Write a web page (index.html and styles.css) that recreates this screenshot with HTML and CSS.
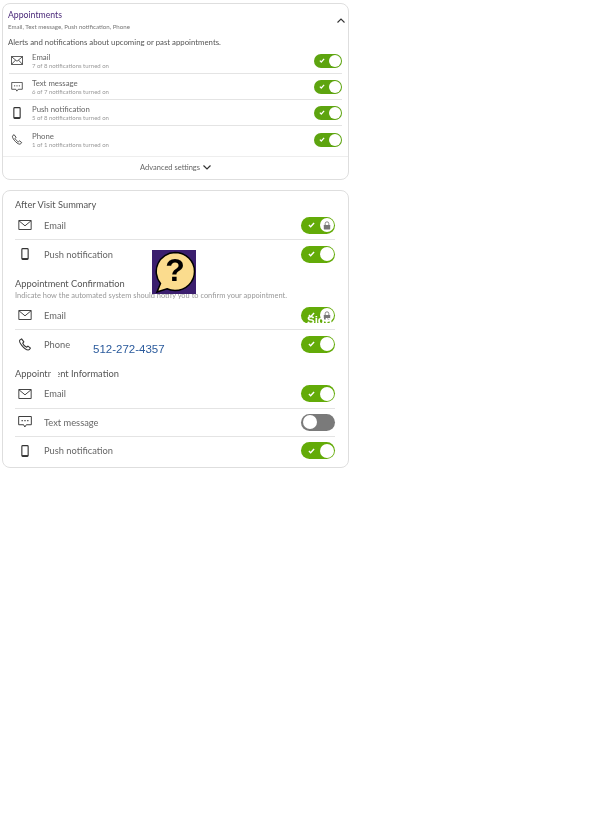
FILE: index.html
```html
<!DOCTYPE html>
<html>
	<head>
		<title>Notification settings</title>
		<link rel="stylesheet" href="styles.css">
	</head>
	<body>
		<svg class="defs" width="0" height="0">
			<symbol id="icEmail" viewBox="0 0 16 12"><path d="M.6.6h14.8v10.8H.6zM.6.8 8 7l7.4-6.2" fill="none" stroke="currentColor" stroke-width="1.1"/></symbol>
			<symbol id="icEmailBox" viewBox="0 0 16 12"><path d="M.6.6h14.800v10.800H.6zM.6.8 8 7l7.400-6.200M.6 11.200 6 5.500M15.400 11.200 10 5.500" fill="none" stroke="currentColor" stroke-width="1.100"/></symbol>
			<symbol id="icText" viewBox="0 0 16 14"><path d="M.6.6h14.800v9.600H9.600l-1.800 2.600-1.400-2.600H.6z" fill="none" stroke="currentColor" stroke-width="1.100"/><path d="M4 5.400h1.400M7.300 5.400h1.400M10.600 5.400H12" stroke="currentColor" stroke-width="1.400"/></symbol>
			<symbol id="icPush" viewBox="0 0 10 16"><rect x=".8" y=".8" width="8.400" height="14.400" rx="1.200" fill="none" stroke="currentColor" stroke-width="1.500"/><path d="M1 13.400h8v1.600H1z" fill="currentColor"/></symbol>
			<symbol id="icPhone" viewBox="0 0 16 16"><path d="M3.800 1 1.600 2.600c-.6 1 0 3.400 2.400 6.400s5.400 5.600 8 5.800c1 0 2-1 2.800-2.400l-3.200-2.400-1.600 1.400C8.400 10.800 6 8.400 5.200 6.400l1.400-1.600z" fill="none" stroke="currentColor" stroke-width="1.300" stroke-linejoin="round"/></symbol>
			<symbol id="icCheck" viewBox="0 0 8 7"><path d="M1 3.600 3 5.600 7 1.200" fill="none" stroke="currentColor" stroke-width="1.700"/></symbol>
			<symbol id="icLock" viewBox="0 0 10 11"><path d="M2.700 5V3.200a2.300 2.300 0 0 1 4.600 0V5" fill="none" stroke="currentColor" stroke-width="1.100"/><rect x="1" y="5" width="8" height="5.500" rx=".6" fill="currentColor"/></symbol>
		</svg>

		<div class="page">
			<div class="card cardSmall">
				<div class="head">
					<div>
						<div class="title">Appointments</div>
						<div class="channels">Email, Text message, Push notification, Phone</div>
					</div>
					<svg class="caret" width="8" height="5" viewBox="0 0 8 5"><path d="M.5 4.500 4 1l3.500 3.500" fill="none" stroke="currentColor" stroke-width="1.100"/></svg>
				</div>
				<div class="intro">Alerts and notifications about upcoming or past appointments.</div>
				<div class="rows">
					<div class="row">
						<svg class="icon" width="12" height="9"><use href="#icEmailBox"/></svg>
						<div class="rowText"><div class="name">Email</div><div class="count">7 of 8 notifications turned on</div></div>
						<span class="toggle on"><svg class="check" width="6" height="5"><use href="#icCheck"/></svg><span class="knob"></span></span>
					</div>
					<div class="row">
						<svg class="icon" width="11" height="10"><use href="#icText"/></svg>
						<div class="rowText"><div class="name">Text message</div><div class="count">6 of 7 notifications turned on</div></div>
						<span class="toggle on"><svg class="check" width="6" height="5"><use href="#icCheck"/></svg><span class="knob"></span></span>
					</div>
					<div class="row">
						<svg class="icon" width="7" height="12"><use href="#icPush"/></svg>
						<div class="rowText"><div class="name">Push notification</div><div class="count">5 of 8 notifications turned on</div></div>
						<span class="toggle on"><svg class="check" width="6" height="5"><use href="#icCheck"/></svg><span class="knob"></span></span>
					</div>
					<div class="row">
						<svg class="icon" width="11" height="11"><use href="#icPhone"/></svg>
						<div class="rowText"><div class="name">Phone</div><div class="count">1 of 1 notifications turned on</div></div>
						<span class="toggle on"><svg class="check" width="6" height="5"><use href="#icCheck"/></svg><span class="knob"></span></span>
					</div>
				</div>
				<div class="advanced">
					Advanced settings
					<svg width="8" height="5" viewBox="0 0 8 5"><path d="M.5.500 4 4l3.500-3.500" fill="none" stroke="currentColor" stroke-width="1.200"/></svg>
				</div>
			</div>

			<div class="card cardLarge">
				<div class="group">
					<h3>After Visit Summary</h3>
					<div class="line">
						<svg class="lineIcon" width="14" height="10"><use href="#icEmail"/></svg>
						<span class="lineName">Email</span>
						<span class="toggle big on"><svg class="check" width="7" height="6"><use href="#icCheck"/></svg><span class="knob"><svg class="lock" width="8" height="9"><use href="#icLock"/></svg></span></span>
					</div>
					<div class="line">
						<svg class="lineIcon" width="8" height="12"><use href="#icPush"/></svg>
						<span class="lineName">Push notification</span>
						<span class="toggle big on"><svg class="check" width="7" height="6"><use href="#icCheck"/></svg><span class="knob"></span></span>
					</div>
				</div>
				<div class="group">
					<h3>Appointment Confirmation</h3>
					<div class="hint">Indicate how the automated system should notify you to confirm your appointment.</div>
					<div class="line">
						<svg class="lineIcon" width="14" height="10"><use href="#icEmail"/></svg>
						<span class="lineName">Email</span>
						<span class="toggle big on"><svg class="check" width="7" height="6"><use href="#icCheck"/></svg><span class="knob"><svg class="lock" width="8" height="9"><use href="#icLock"/></svg></span></span>
					</div>
					<div class="line">
						<svg class="lineIcon" width="13" height="13"><use href="#icPhone"/></svg>
						<span class="lineName">Phone</span>
						<span class="toggle big on"><svg class="check" width="7" height="6"><use href="#icCheck"/></svg><span class="knob"></span></span>
					</div>
				</div>
				<div class="group groupLast">
					<h3>Appointment Information</h3>
					<div class="line">
						<svg class="lineIcon" width="14" height="10"><use href="#icEmail"/></svg>
						<span class="lineName">Email</span>
						<span class="toggle big on"><svg class="check" width="7" height="6"><use href="#icCheck"/></svg><span class="knob"></span></span>
					</div>
					<div class="line">
						<svg class="lineIcon" width="13" height="12"><use href="#icText"/></svg>
						<span class="lineName">Text message</span>
						<span class="toggle big off"><span class="knob"></span></span>
					</div>
					<div class="line">
						<svg class="lineIcon" width="8" height="12"><use href="#icPush"/></svg>
						<span class="lineName">Push notification</span>
						<span class="toggle big on"><svg class="check" width="7" height="6"><use href="#icCheck"/></svg><span class="knob"></span></span>
					</div>
				</div>

				<div class="helpBadge">
					<svg width="44" height="44" viewBox="0 0 44 44">
						<path d="M23 2.500a19.500 19 0 0 1 0 38c-3 0-5.500-.5-8-1.700L5 42l3.500-8.500A19 19 0 0 1 23 2.500z" fill="#fbdc8e" stroke="#000" stroke-width="1.500"/>
					</svg>
					<span class="helpMark">?</span>
				</div>
				<div class="phoneNumber">512-272-4357</div>
				<div class="signOver">Sign</div>
				<div class="infoPatch"></div>
			</div>
		</div>
	</body>
</html>
```

FILE: styles.css
```css
html, body {
	margin: 0;
	padding: 0;
	background: #fff;
}
body {
	font-family: "Lato", "Open Sans", sans-serif;
	color: #4a4a4a;
	width: 612px;
	height: 824px;
	overflow: hidden;
}
.defs {
	position: absolute;
}
.page {
	padding: 3px 0 0 2px;
	width: 347px;
	filter: blur(0.3px);
}
.card {
	position: relative;
	width: 347px;
	box-sizing: border-box;
	border: 1px solid #dedede;
	border-radius: 8px;
	background: #fff;
}
.cardSmall {
	height: 177px;
}
.cardLarge {
	height: 278px;
	margin-top: 10px;
	padding: 7px 13px 0 12px;
}

.head {
	display: flex;
	justify-content: space-between;
	box-sizing: border-box;
	padding: 5px 3px 0 5px;
	height: 26px;
}
.title {
	font-size: 8.700px;
	line-height: 12px;
	color: #4b2a7a;
}
.channels {
	font-size: 6.150px;
	line-height: 9px;
	margin-top: 1px;
	color: #777;
}
.caret {
	margin-top: 9px;
	color: #333;
}
.intro {
	font-size: 7.800px;
	line-height: 11px;
	padding: 7px 5px 0;
	color: #555;
}
.rows {
	padding: 0 6px;
	border-bottom: 1px solid #eee;
}
.row {
	display: flex;
	align-items: center;
	box-sizing: border-box;
	height: 26px;
	border-bottom: 1px solid #e4e4e4;
}
.row:last-child {
	border-bottom: none;
	height: 30px;
	padding-bottom: 3px;
}
.icon {
	width: 12px;
	margin-left: 2px;
	margin-right: 9px;
	flex: none;
	color: #333;
}
.rowText {
	flex: 1;
}
.name {
	font-size: 7.800px;
	line-height: 10px;
	color: #666;
}
.count {
	font-size: 6px;
	line-height: 8px;
	color: #999;
}
.advanced {
	display: flex;
	align-items: center;
	justify-content: center;
	gap: 3px;
	height: 21px;
	font-size: 7.500px;
	color: #666;
}
.advanced svg {
	color: #333;
}

.toggle {
	display: flex;
	align-items: center;
	flex: none;
	position: relative;
	width: 28px;
	height: 14px;
	border-radius: 7px;
	box-sizing: border-box;
	padding: 0 1px 0 5px;
	justify-content: space-between;
}
.toggle.on {
	background: #5da40f;
	color: #fff;
}
.toggle .knob {
	display: flex;
	align-items: center;
	justify-content: center;
	width: 12px;
	height: 12px;
	border-radius: 50%;
	background: #fff;
}
.toggle.big {
	width: 34px;
	height: 17px;
	border-radius: 9px;
	padding: 0 1.500px 0 7px;
}
.toggle.big.on {
	background: #63ab08;
}
.toggle.big .knob {
	width: 14px;
	height: 14px;
}
.toggle.off {
	background: #7a7a7a;
	padding: 0 0 0 1.500px;
}
.lock {
	color: #777;
}

.group {
	margin-bottom: 9px;
}
.group h3 {
	margin: 0;
	font-size: 9.300px;
	font-weight: 400;
	line-height: 13px;
	color: #555;
}
.hint {
	font-size: 7.450px;
	line-height: 10px;
	color: #999;
	margin-top: 1px;
}
.line {
	display: flex;
	align-items: center;
	height: 28px;
	border-bottom: 1px solid #e4e4e4;
}
.line:last-child {
	border-bottom: none;
}
.groupLast .line {
	height: 27.500px;
}
.lineIcon {
	width: 14px;
	margin: 0 12px 0 3px;
	flex: none;
	color: #333;
}
.lineName {
	flex: 1;
	font-size: 9.300px;
	color: #666;
}

/* pasted over the card, not part of the flow */
.helpBadge {
	position: absolute;
	left: 149px;
	top: 59px;
	width: 44px;
	height: 44px;
	background: #3b1e6e;
}
.helpBadge svg {
	display: block;
}
.helpMark {
	position: absolute;
	left: 1px;
	top: 1px;
	width: 44px;
	text-align: center;
	font-family: "Liberation Sans", sans-serif;
	font-size: 32px;
	line-height: 38px;
	font-weight: 700;
	color: #000;
}
.phoneNumber {
	position: absolute;
	left: 90px;
	top: 151px;
	font-family: "Liberation Sans", sans-serif;
	font-size: 11.500px;
	line-height: 15px;
	color: #2a5a9c;
}
.signOver {
	position: absolute;
	left: 298px;
	top: 123px;
	box-sizing: border-box;
	width: 38px;
	height: 15px;
	padding-left: 6px;
	overflow: hidden;
	font-family: "Liberation Sans", sans-serif;
	font-size: 11.500px;
	line-height: 12px;
	font-weight: 700;
	color: #fff;
	background: linear-gradient(to bottom, transparent 0, transparent 9px, #fff 9px);
}
.infoPatch {
	position: absolute;
	left: 48px;
	top: 178px;
	width: 7px;
	height: 8px;
	background: #fff;
}
```
